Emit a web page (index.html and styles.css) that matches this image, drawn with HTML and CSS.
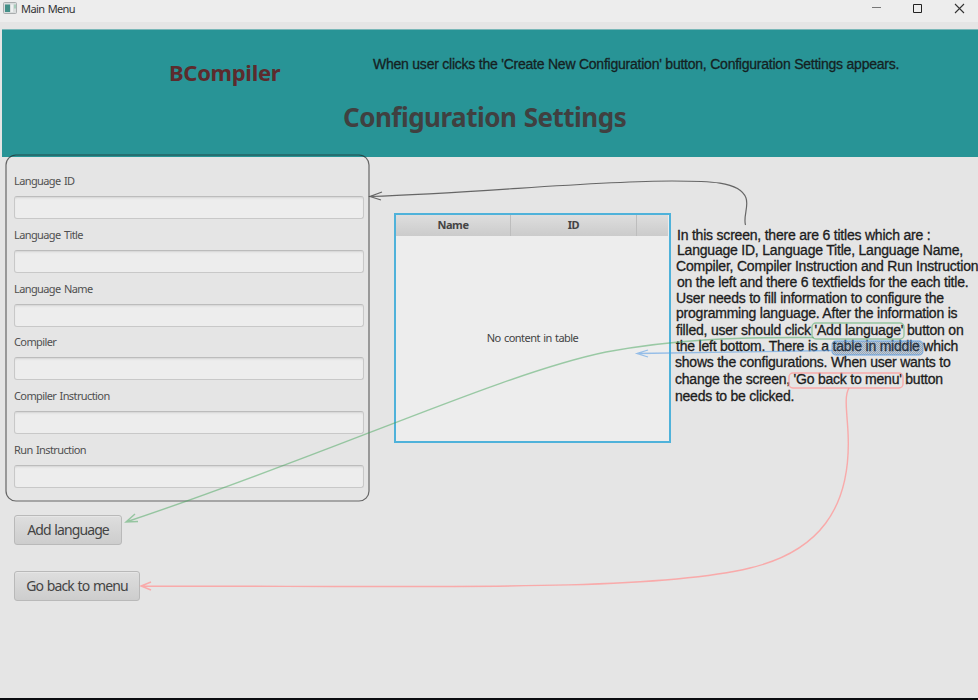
FILE: index.html
```html
<!DOCTYPE html>
<html lang="en">
<head>
<meta charset="utf-8">
<title>Main Menu</title>
<link rel="stylesheet" href="styles.css">
</head>
<body>
<div class="window">
  <div class="titlebar">
    <svg class="app-icon" width="14" height="12" viewBox="0 0 14 12"><rect x=".5" y=".5" width="13" height="11" rx="1" fill="#d9dddd" stroke="#a9adae"/><rect x="2" y="2.5" width="5" height="7.5" fill="#438f88"/><rect x="8" y="2.5" width="2" height="7.500" fill="#eef1f1"/><rect x="11" y="2.500" width="2" height="4" fill="#a6cdbb"/></svg>
    <span class="window-title">Main Menu</span>
    <svg class="controls" width="90" height="12" viewBox="0 0 90 12" fill="none"><path d="M2 5.500h9" stroke="#777"/><path d="M43.500 2.500h8v8h-8z" stroke="#222"/><path d="M85 2l9 9M94 2l-9 9" stroke="#333" stroke-width="1.100"/></svg>
  </div>
  <header class="banner">
    <div class="brand">BCompiler</div>
    <div class="note banner-note">When user clicks the 'Create New Configuration' button, Configuration Settings appears.</div>
    <h1>Configuration Settings</h1>
  </header>
  <main>
    <section class="left">
      <form class="fields">
        <label>Language ID<input></label>
        <label>Language Title<input></label>
        <label>Language Name<input></label>
        <label>Compiler<input></label>
        <label>Compiler Instruction<input></label>
        <label>Run Instruction<input></label>
      </form>
      <button class="add">Add language</button>
      <button class="back">Go back to menu</button>
    </section>
    <section class="table">
      <div class="thead"><span>Name</span><span>ID</span><span></span></div>
      <div class="empty">No content in table</div>
    </section>
    <aside class="note lines">
      <span class="inset">In this screen, there are 6 titles which are :</span>
      <span class="inset">Language ID, Language Title, Language Name,</span>
      <span>Compiler, Compiler Instruction and Run Instruction</span>
      <span class="inset">on the left and there 6 textfields for the each title.</span>
      <span>User needs to fill information to configure the</span>
      <span>programming language. After the information is</span>
      <span>filled, user should click 'Add language' button on</span>
      <span>the left bottom. There is a table in middle which</span>
      <span class="outset">shows the configurations. When user wants to</span>
      <span class="outset">change the screen, 'Go back to menu' button</span>
      <span class="outset">needs to be clicked.</span>
    </aside>
  </main>
  <svg class="annotations" width="978" height="700" viewBox="0 0 978 700" fill="none">
    <defs><pattern id="dots" width="2" height="2" patternUnits="userSpaceOnUse"><rect width="2" height="2" fill="#3d6a98" fill-opacity=".22"/><path d="M0 0h1v1H0zM1 1h1v1H1z" fill="#1c456f" fill-opacity=".25"/></pattern></defs>
    <g stroke="#222" stroke-opacity=".65" stroke-width="1.200">
      <rect x="6" y="155" width="363" height="346" rx="10"/>
      <path d="M745.500 225C743 217 749 206 746 198C740 181 707 181 672 181C590 181 480 193 370 196.500M382 192L370 196.500L381 200"/>
    </g>
    <g stroke="#46a65b" stroke-opacity=".5" stroke-width="1.400">
      <path d="M814 337.500C740 337 675 339 606 352C500 374 330 454 126 522M135 514L126 522L138 521.500"/>
      <rect x="812" y="323" width="92" height="16" rx="4"/>
    </g>
    <g stroke="#5b9fe5" stroke-opacity=".6" stroke-width="1.300">
      <path d="M832 350.500C770 351.500 700 352.500 637 353.500M648 350L637 353.500L648 357"/>
      <rect x="832" y="341" width="91" height="14" rx="4" fill="url(#dots)"/>
    </g>
    <g stroke="#ff9696" stroke-opacity=".75" stroke-width="1.400">
      <path d="M849 388C844 396 847 412 848 432C852 510 817 552 750 568C650 592 430 586 141 586M151 582L141 586L151 590"/>
      <rect x="789" y="373" width="114" height="15" rx="4"/>
    </g>
  </svg>
</div>
</body>
</html>
```
FILE: styles.css
```css
* { box-sizing: border-box; }
body { margin: 0; background: #e5e5e5; font-family: "Noto Sans", sans-serif; }
.window { position: relative; width: 978px; height: 700px; overflow: hidden; border-bottom: 2px solid #0b0c10; background: #e5e5e5; }
.titlebar { height: 22px; padding: 2px 18px 8px 3px; display: flex; align-items: center; background: #ededed; }
.window-title { margin-left: 4px; padding-top: 1px; font-size: 11px; letter-spacing: -.6px; word-spacing: 1px; color: #333; line-height: 12px; }
.controls { margin-left: auto; overflow: visible; }
.banner { height: 128px; margin: 7px 0 0 2px; background: #289496; border-top: 1px solid #79b7b8; display: grid; grid-template-columns: 167px 204px 1fr; grid-template-rows: 66px 1fr; }
.brand { grid-column: 2; padding-top: 27px; font: bold 22px/30px "Noto Sans", sans-serif; letter-spacing: -.3px; color: #5c2b2d; }
.note { font: 14px/16px "Liberation Sans", sans-serif; color: #1c1c1c; white-space: nowrap; -webkit-text-stroke: .3px #1c1c1c; }
.banner-note { padding-top: 26px; letter-spacing: -.23px; color: #102526; }
h1 { grid-column: 1 / -1; margin: 0; padding: 3px 0 0 341px; font: bold 26px/36px "Noto Sans", sans-serif; letter-spacing: -.5px; word-spacing: 1px; color: #404040; white-space: nowrap; }
main { display: flex; align-items: flex-start; }
.left { width: 394px; padding: 15px 0 0 14px; display: flex; flex-direction: column; align-items: flex-start; }
.fields { height: 343px; }
label { display: block; height: 53.8px; font-size: 11px; line-height: 18px; letter-spacing: -.6px; word-spacing: 1px; color: #505050; }
input { display: block; width: 350px; height: 23px; margin-top: 6px; border: 1px solid #c8c8c8; border-top-color: #bcbcbc; border-radius: 3px; background: #ededed; box-shadow: inset 0 2px 2px -1px #d4d4d4; }
button { height: 30px; padding: 0; border: 1px solid #b9b9b9; border-radius: 3px; background: linear-gradient(#dedede, #cdcdcd); box-shadow: inset 0 1px #e6e6e6; font: 14px/26px "Noto Sans", sans-serif; letter-spacing: -.9px; word-spacing: 1px; color: #444; }
.add { width: 108px; }
.back { width: 126px; margin-top: 26px; }
.table { width: 277px; height: 230px; margin-top: 56px; border: 2px solid #4fb2da; background: #ededed; font-size: 11px; color: #444; }
.thead { display: grid; grid-template-columns: 114px 126px 1fr; height: 21px; margin-right: 1px; background: linear-gradient(#dedede, #cbcbcb); font-weight: bold; letter-spacing: -.4px; text-align: center; line-height: 19px; }
.thead span + span { border-left: 1px solid #bdbdbd; }
.empty { text-align: center; padding-top: 92px; line-height: 20px; letter-spacing: -.55px; word-spacing: 1px; }
.lines { margin: 70px 0 0 4px; width: 303px; display: grid; grid-template-rows: 15px 16px 16px 16px 15px 17px 16px 16px 17px 17px 16px; padding-left: 1px; letter-spacing: -.21px; }
.inset { padding-left: 1px; }
.outset { margin-left: -1px; letter-spacing: -.23px; }
.annotations { position: absolute; left: 0; top: 0; pointer-events: none; }
```
